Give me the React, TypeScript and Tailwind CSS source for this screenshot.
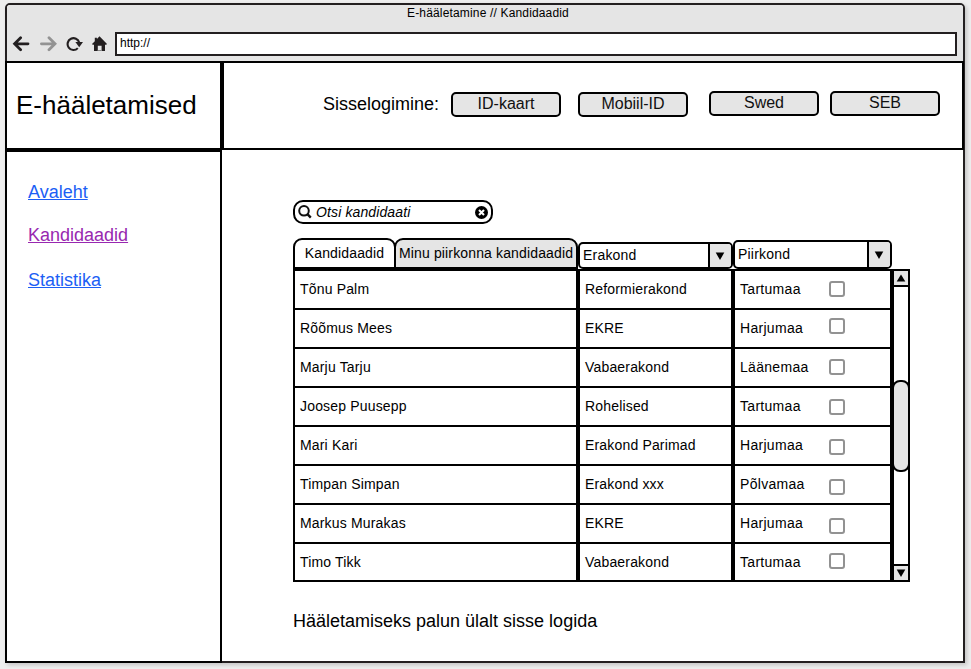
import React from "react";

const candidates = [
  { name: "Tõnu Palm", party: "Reformierakond", region: "Tartumaa", box: "mt-[10px]", height: "h-[39px]" },
  { name: "Rõõmus Mees", party: "EKRE", region: "Harjumaa", box: "mt-[8px]", height: "h-[39px]" },
  { name: "Marju Tarju", party: "Vabaerakond", region: "Läänemaa", box: "mt-[10px]", height: "h-[39px]" },
  { name: "Joosep Puusepp", party: "Rohelised", region: "Tartumaa", box: "mt-[11px]", height: "h-[39px]" },
  { name: "Mari Kari", party: "Erakond Parimad", region: "Harjumaa", box: "mt-[12px]", height: "h-[39px]" },
  { name: "Timpan Simpan", party: "Erakond xxx", region: "Põlvamaa", box: "mt-[13px]", height: "h-[39px]" },
  { name: "Markus Murakas", party: "EKRE", region: "Harjumaa", box: "mt-[13px]", height: "h-[39px]" },
  { name: "Timo Tikk", party: "Vabaerakond", region: "Tartumaa", box: "mt-[9px]", height: "h-[38px]" },
];

function Triangle({ up = false }: { up?: boolean }) {
  return (
    <svg width="10" height="8" viewBox="0 0 10 8" className="block shrink-0">
      <path d={up ? "M5 .5 9.3 7.5H.7Z" : "M.7 .5h8.6L5 8Z"} fill="#000" />
    </svg>
  );
}

function BrowserBar() {
  return (
    <div className="h-[56px] bg-[#e5e5e5] rounded-t-[3px]">
      <div className="h-[27px] pl-[6px] text-center text-[12px] leading-[16px] tracking-[0.16px]">
        E-hääletamine // Kandidaadid
      </div>
      <div className="flex h-[24px] items-center pl-[5px]">
        <svg width="18" height="16" viewBox="0 0 18 16" className="block">
          <path d="M8.6 1.8 2.6 7.8l6 6M3 7.8h13" fill="none" stroke="#231f20" strokeWidth="2.8" strokeLinecap="round" />
        </svg>
        <svg width="18" height="16" viewBox="0 0 18 16" className="ml-[9px] block">
          <path d="m10 1.8 6 6-6 6M15.4 7.8H2.4" fill="none" stroke="#939393" strokeWidth="2.8" strokeLinecap="round" />
        </svg>
        <svg width="18" height="16" viewBox="0 0 18 16" className="ml-[9px] block">
          <path d="M11.8 12.1A5.9 5.9 0 1 1 13.2 6.5" fill="none" stroke="#231f20" strokeWidth="2.1" />
          <path d="M9.4 6h7.6l-3.8 5.2Z" fill="#231f20" />
        </svg>
        <svg width="16" height="16" viewBox="0 0 16 16" className="ml-[7px] block">
          <path d="M8.5.3 16 8l-.8.7H14V15H10.6V9.8H6.8V15H3V8.7H1.7L1 8l2.8-2.8V1.8h2.1v1.1Z" fill="#231f20" />
          <path d="M6.8 14h3.8v1H6.8Z" fill="#888" />
        </svg>
        <div className="ml-[8px] h-[24px] w-[842px] border-2 border-[#231f20] bg-white pl-[3px] text-[12px] leading-[18px]">
          http://
        </div>
      </div>
    </div>
  );
}

function Login({ label, className }: { label: string; className: string }) {
  return (
    <button
      className={`flex h-[25px] w-[110px] items-start justify-center rounded-[5px] border-2 border-black bg-[#e5e5e5] text-center text-[16px] leading-[19px] text-[#111] ${className}`}
    >
      {label}
    </button>
  );
}

function Select({ label, className, arrow, text }: { label: string; className: string; arrow: string; text: string }) {
  return (
    <div className={`flex overflow-hidden rounded-[5px] border-2 border-black bg-white text-[14px] ${className}`}>
      <span className={`flex-1 pl-[3px] tracking-[0.2px] ${text}`}>{label}</span>
      <span className={`flex items-center justify-center border-l-2 border-black bg-[#e5e5e5] pr-px ${arrow}`}>
        <Triangle />
      </span>
    </div>
  );
}

function CandidateTable() {
  return (
    <div className="flex h-[313px] w-[617px] border-b-2 border-l-2 border-black">
      <div className="w-[597px]">
        {candidates.map((c) => (
          <div key={c.name} className={`flex border-t-2 border-black text-[14px] leading-[37px] tracking-[0.17px] ${c.height}`}>
            <div className="w-[285px] border-r-4 border-black pl-[5px]">{c.name}</div>
            <div className="w-[155px] border-r-4 border-black pl-[5px]">{c.party}</div>
            <div className="flex w-[157px] pl-[5px]">
              <span className="w-[89px] tracking-[0.3px]">{c.region}</span>
              <span className={`block h-[16px] w-[16px] rounded-[3px] border-2 border-[#929292] ${c.box}`} />
            </div>
          </div>
        ))}
      </div>
      <div className="relative -ml-[2px] flex w-[20px] flex-col border-l-4 border-r-2 border-t-2 border-black">
        <div className="flex h-[16px] items-center justify-center border-b-2 border-black bg-[#e5e5e5]">
          <Triangle up />
        </div>
        <div className="flex-1" />
        <div className="flex h-[16px] items-center justify-center border-t-2 border-black bg-[#e5e5e5]">
          <Triangle />
        </div>
        <div className="absolute -left-[2px] top-[109px] h-[92px] w-[18px] rounded-[8px] border-2 border-black bg-[#e5e5e5]" />
      </div>
    </div>
  );
}

export default function App() {
  return (
    <div className="h-[669px] w-[971px] overflow-hidden bg-[#eeeeee] pl-[5px] pt-[3px] font-['Liberation_Sans',Arial,sans-serif] text-black">
      <div className="h-[660px] w-[960px] rounded-t-[5px] border-2 border-[#231f20] bg-white shadow-[2px_2px_4px_rgba(0,0,0,0.18)]">
        <BrowserBar />
        <div className="flex h-[602px]">
          <div className="relative -ml-[2px] flex w-[217px] flex-col">
            <div className="h-[89px] border-2 border-black pl-[9px] text-[26px] leading-[84px]">E-hääletamised</div>
            <nav className="flex flex-1 flex-col items-start border-2 border-black pl-[21px] pt-[30px] text-[18px] leading-[20px] text-[#1c5ff5]">
              <a className="underline underline-offset-1 decoration-1">Avaleht</a>
              <a className="mt-[23px] text-[#9828b0] underline underline-offset-1 decoration-1">Kandidaadid</a>
              <a className="mt-[25px] underline underline-offset-1 decoration-1">Statistika</a>
            </nav>
          </div>
          <div className="relative -mr-[1px] flex w-[742px] flex-col">
            <header className="flex h-[89px] items-start border-2 border-black pl-[99px] pt-[28px]">
              <span className="w-[128px] text-[18px] leading-[26px]">Sisselogimine:</span>
              <Login label="ID-kaart" className="mt-[1px]" />
              <Login label="Mobiil-ID" className="ml-[17px] mt-[1px]" />
              <Login label="Swed" className="ml-[21px]" />
              <Login label="SEB" className="ml-[11px]" />
            </header>
            <main className="pl-[71px] pt-[50px]">
              <div className="flex h-[24px] w-[200px] items-center rounded-[10px] border-2 border-black bg-white pl-[3px] pr-[3px]">
                <svg width="15" height="15" viewBox="0 0 15 15" className="block">
                  <circle cx="6" cy="5.8" r="4.8" fill="none" stroke="#111" strokeWidth="2" />
                  <path d="m9.4 9.2 3.4 3.4" stroke="#111" strokeWidth="2.4" />
                </svg>
                <span className="ml-[3px] flex-1 text-[14px] italic leading-[20px] tracking-[0.12px]">Otsi kandidaati</span>
                <svg width="13" height="13" viewBox="0 0 13 13" className="block">
                  <circle cx="6.5" cy="6.5" r="6.5" fill="#000" />
                  <path d="m4 4 5 5m0-5-5 5" stroke="#fff" strokeWidth="2.1" />
                </svg>
              </div>
              <div className="mt-[14px] flex h-[31px] items-end">
                <div className="h-[31px] w-[103px] rounded-t-[9px] border-2 border-black bg-white text-center text-[14px] leading-[27px] tracking-[0.15px]">
                  Kandidaadid
                </div>
                <div className="-ml-[2px] h-[31px] w-[184px] whitespace-nowrap rounded-t-[9px] border-2 border-black bg-[#e5e5e5] pl-[3px] text-[14px] leading-[27px] tracking-[0.14px]">
                  Minu piirkonna kandidaadid
                </div>
                <Select label="Erakond" className="h-[27px] w-[155px]" arrow="w-[23px]" text="leading-[23px]" />
                <Select label="Piirkond" className="h-[29px] w-[159px]" arrow="w-[23px]" text="leading-[25px]" />
              </div>
              <CandidateTable />
              <p className="mt-[28px] text-[18px] leading-[22px]">Hääletamiseks palun ülalt sisse logida</p>
            </main>
          </div>
        </div>
      </div>
    </div>
  );
}
